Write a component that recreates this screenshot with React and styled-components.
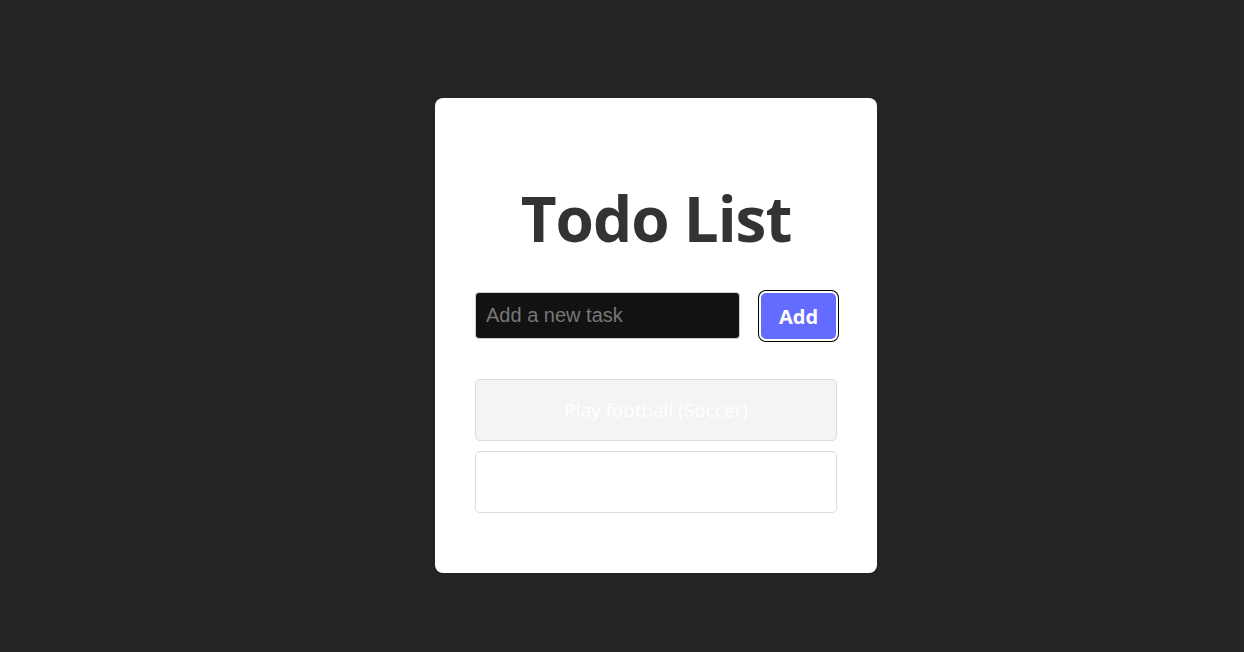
import React from "react";
import styled, { createGlobalStyle } from "styled-components";

const GlobalStyle = createGlobalStyle`
  html, body {
    margin: 0;
    padding: 0;
    background: #242424;
  }
  body {
    font-family: "Open Sans", "Noto Sans", sans-serif;
  }
`;

const Page = styled.div`
  height: 652px;
  display: flex;
  justify-content: center;
  padding: 98px 0 0 68px;
  box-sizing: border-box;
`;

const Card = styled.div`
  width: 442px;
  height: 475px;
  box-sizing: border-box;
  background: #ffffff;
  border-radius: 8px;
  padding: 78px 40px 40px;
  display: flex;
  flex-direction: column;
`;

const Title = styled.h1`
  margin: 0;
  text-align: center;
  font-family: "Open Sans", sans-serif;
  font-weight: 700;
  font-size: 62px;
  line-height: 84px;
  color: #333333;
  letter-spacing: -1px;
`;

const Form = styled.div`
  display: flex;
  align-items: center;
  justify-content: space-between;
  margin-top: 32px;
`;

const Input = styled.input`
  width: 265px;
  height: 47px;
  box-sizing: border-box;
  background: #121212;
  border: 1px solid #cfcfcf;
  border-radius: 4px;
  padding: 0 10px;
  font-family: "Liberation Sans", Arial, sans-serif;
  font-size: 20px;
  color: #eee;
  outline: none;

  &::placeholder {
    color: #777777;
  }
`;

const AddButton = styled.button`
  width: 75px;
  height: 46px;
  margin-right: 1px;
  border: none;
  border-radius: 5px;
  background: #646cff;
  color: #ffffff;
  font-family: "Open Sans", sans-serif;
  font-weight: 700;
  font-size: 20px;
  padding: 2px 0 0;
  box-shadow: 0 0 0 2px #ffffff, 0 0 0 3px #000000;
  cursor: pointer;
`;

const List = styled.ul`
  list-style: none;
  margin: 40px 0 0;
  padding: 0;
  display: flex;
  flex-direction: column;
  gap: 10px;
`;

const Item = styled.li`
  height: 62px;
  box-sizing: border-box;
  display: flex;
  align-items: center;
  justify-content: center;
  border: 1px solid #dcdcdc;
  border-radius: 5px;
  background: ${(p) => (p.$done ? "#f4f4f4" : "#ffffff")};
  color: #ffffff;
  font-family: "Open Sans", sans-serif;
  font-size: 19px;
`;

const todos = [
  { id: 1, text: "Play football (Soccer)", done: true },
  { id: 2, text: "", done: false },
];

export default function App() {
  return (
    <>
      <GlobalStyle />
      <Page>
        <Card>
          <Title>Todo List</Title>
          <Form>
            <Input placeholder="Add a new task" />
            <AddButton>Add</AddButton>
          </Form>
          <List>
            {todos.map((t) => (
              <Item key={t.id} $done={t.done}>
                {t.text}
              </Item>
            ))}
          </List>
        </Card>
      </Page>
    </>
  );
}
